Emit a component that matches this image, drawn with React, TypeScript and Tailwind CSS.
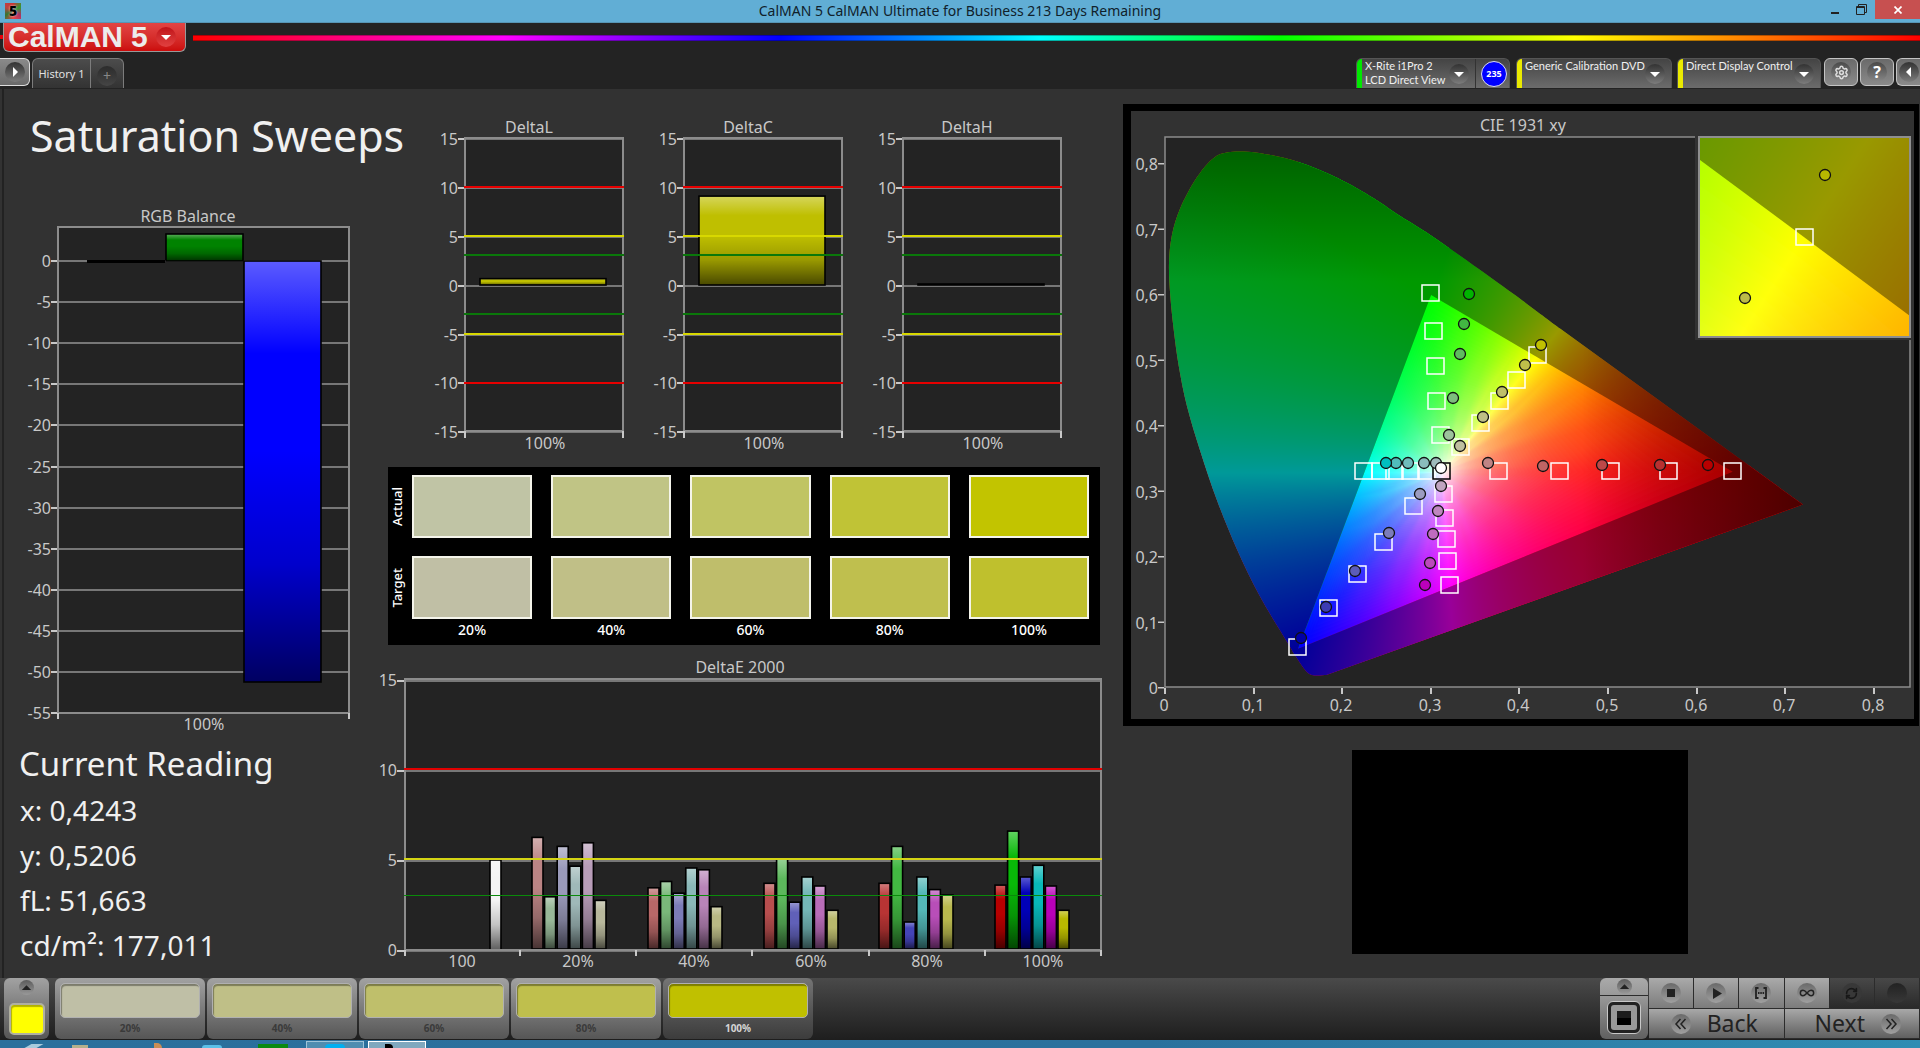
import React from "react";
import { Settings, RefreshCw, Infinity as InfinityIcon } from "lucide-react";

const FONT = "font-['Noto_Sans','Open_Sans',sans-serif]";
const GRID = "#8c8c8c";
const LABEL = "#c8c8c8";

/* ---------- chromaticity maths ---------- */

type Pt = [number, number];
type Scale = { ox: number; oy: number; sx: number; sy: number };
type Box = { x: number; y: number; w: number; h: number };

const RED: Pt = [0.64, 0.33];
const GREEN: Pt = [0.3, 0.6];
const BLUE: Pt = [0.15, 0.06];
const WHITE: Pt = [0.3127, 0.329];

const LOCUS: Pt[] = [
  [0.1818, 0.02], [0.1657, 0.02], [0.1544, 0.034], [0.13, 0.0873], [0.1056, 0.1434], [0.0811, 0.2119], [0.0586, 0.2867],
  [0.0398, 0.3615], [0.0248, 0.43], [0.0154, 0.4924], [0.0097, 0.5484], [0.006, 0.5983], [0.0045, 0.6481],
  [0.0079, 0.6918], [0.0172, 0.7323], [0.0342, 0.7759], [0.0529, 0.807], [0.07, 0.8177], [0.1018, 0.8177],
  [0.1488, 0.8039], [0.1939, 0.779], [0.2352, 0.7477], [0.2615, 0.7237], [0.2991, 0.6917], [0.348, 0.6451],
  [0.393, 0.6016], [0.4457, 0.5484],
];

function chroma(r: number, g: number, b: number): Pt {
  const X = 0.4124 * r + 0.3576 * g + 0.1805 * b;
  const Y = 0.2126 * r + 0.7152 * g + 0.0722 * b;
  const Z = 0.0193 * r + 0.1192 * g + 0.9505 * b;
  const s = X + Y + Z;
  return [X / s, Y / s];
}

const project = (s: Scale, p: Pt): Pt => [s.ox + p[0] * s.sx, s.oy - p[1] * s.sy];

function angleFrom(s: Scale, center: Pt, p: Pt) {
  const a = project(s, center);
  const b = project(s, p);
  const deg = (Math.atan2(b[0] - a[0], a[1] - b[1]) * 180) / Math.PI;
  return (deg + 360) % 360;
}

function edgeColors(a: number[], b: number[]) {
  const out: number[][] = [];
  for (let i = 0; i <= 24; i++) {
    const t = i / 12;
    const ka = t <= 1 ? 1 : 2 - t;
    const kb = t <= 1 ? t : 1;
    out.push(a.map((v, k) => v * ka + b[k] * kb));
  }
  return out;
}

const R3 = [1, 0, 0];
const G3 = [0, 1, 0];
const B3 = [0, 0, 1];

function conic(s: Scale, box: Box, center: Pt, colors: number[][], wrap: boolean) {
  const stops = colors
    .map((c) => ({ a: angleFrom(s, center, chroma(c[0], c[1], c[2])), c }))
    .sort((m, n) => m.a - n.a);
  const list = wrap
    ? [{ a: stops[stops.length - 1].a - 360, c: stops[stops.length - 1].c }, ...stops, { a: stops[0].a + 360, c: stops[0].c }]
    : stops;
  const [cx, cy] = project(s, center);
  const text = list
    .map((q) => `rgb(${q.c.map((v) => Math.round(v * 255)).join(",")}) ${q.a.toFixed(2)}deg`)
    .join(",");
  return `conic-gradient(from 0deg at ${cx - box.x}px ${cy - box.y}px, ${text})`;
}

function smooth(points: Pt[]) {
  let d = `M${points[0][0]} ${points[0][1]}`;
  for (let i = 0; i < points.length - 1; i++) {
    const p0 = points[Math.max(i - 1, 0)];
    const p1 = points[i];
    const p2 = points[i + 1];
    const p3 = points[Math.min(i + 2, points.length - 1)];
    d += `C${p1[0] + (p2[0] - p0[0]) / 6} ${p1[1] + (p2[1] - p0[1]) / 6} ${p2[0] - (p3[0] - p1[0]) / 6} ${p2[1] - (p3[1] - p1[1]) / 6} ${p2[0]} ${p2[1]}`;
  }
  return d;
}

const poly = (s: Scale, pts: Pt[]) => pts.map((p) => project(s, p).join(",")).join(" ");

function Fill({ box, image, clip }: { box: Box; image: string; clip?: string }) {
  return (
    <g clipPath={clip}>
      <foreignObject x={box.x} y={box.y} width={box.w} height={box.h}>
        <div className="h-full w-full" style={{ backgroundImage: image }} />
      </foreignObject>
    </g>
  );
}

function ColorField({ id, s, box }: { id: string; s: Scale; box: Box }) {
  const outline = smooth(LOCUS.map((p) => project(s, p))) + "L" + project(s, [0.719, 0.28]).join(" ") + "Z";
  const extend = (a: Pt, b: Pt, t: number): Pt => [a[0] + (b[0] - a[0]) * t, a[1] + (b[1] - a[1]) * t];
  const leftSide: Pt[] = [extend(BLUE, GREEN, -1), extend(BLUE, GREEN, 2), [-1, 2], [-1, -1]];
  const bottomSide: Pt[] = [extend(BLUE, RED, -1), extend(BLUE, RED, 2), [2, -1], [-1, -1]];
  const steps = 72;
  const layers = [];
  for (let k = 1; k < steps; k++) {
    const w = k / steps;
    const prev = (k - 1) / steps;
    const corners = [[1, w, w], [1, 1, w], [w, 1, w], [w, 1, 1], [w, w, 1], [1, w, 1]];
    layers.push(
      <polygon
        key={k}
        points={poly(s, corners.map((c) => chroma(c[0], c[1], c[2])))}
        fill="#fff"
        fillOpacity={1 - (1 - w) / (1 - prev)}
      />
    );
  }
  const [x0] = project(s, [0.47, 0]);
  const [x1] = project(s, [0.72, 0]);
  const [, y0] = project(s, [0, 0.62]);
  const [, y1] = project(s, [0, 0.83]);
  const all = [...edgeColors(R3, G3), ...edgeColors(G3, B3).slice(1), ...edgeColors(B3, R3).slice(1, -1)];
  return (
    <g>
      <defs>
        <clipPath id={id + "-locus"}><path d={outline} /></clipPath>
        <clipPath id={id + "-left"}><polygon points={poly(s, leftSide)} /></clipPath>
        <clipPath id={id + "-bottom"}><polygon points={poly(s, bottomSide)} /></clipPath>
        <clipPath id={id + "-gamut"}><polygon points={poly(s, [RED, GREEN, BLUE])} /></clipPath>
        <clipPath id={id + "-box"}><rect x={box.x} y={box.y} width={box.w} height={box.h} /></clipPath>
        <linearGradient id={id + "-rd"} gradientUnits="userSpaceOnUse" x1={x0} x2={x1} y1="0" y2="0">
          <stop offset="0" stopOpacity="0" />
          <stop offset="0.35" stopOpacity="0.2" />
          <stop offset="1" stopOpacity="0.5" />
        </linearGradient>
        <linearGradient id={id + "-gd"} gradientUnits="userSpaceOnUse" x1="0" x2="0" y1={y0} y2={y1}>
          <stop offset="0" stopOpacity="0" />
          <stop offset="1" stopOpacity="0.38" />
        </linearGradient>
      </defs>
      <g clipPath={`url(#${id}-box)`}>
        <g clipPath={`url(#${id}-locus)`}>
          <Fill box={box} image={conic(s, box, BLUE, edgeColors(R3, G3), false)} />
          <Fill box={box} image={conic(s, box, GREEN, edgeColors(R3, B3), false)} clip={`url(#${id}-bottom)`} />
          <Fill box={box} image={conic(s, box, RED, edgeColors(G3, B3), false)} clip={`url(#${id}-left)`} />
          <rect x={box.x} y={box.y} width={box.w} height={box.h} fill="#000" fillOpacity="0.4" />
          <g clipPath={`url(#${id}-gamut)`}>
            <Fill box={box} image={conic(s, box, WHITE, all, true)} />
            {layers}
          </g>
          <rect x={box.x} y={box.y} width={box.w} height={box.h} fill={`url(#${id}-rd)`} />
          <rect x={box.x} y={box.y} width={box.w} height={box.h} fill={`url(#${id}-gd)`} />
        </g>
      </g>
    </g>
  );
}

const TARGETS: Pt[] = [
  [1430, 293], [1433, 331], [1435, 366], [1436, 401], [1440, 435], [1460, 447], [1480, 423], [1499, 401], [1516, 380],
  [1537, 355], [1363, 471], [1380, 471], [1394, 471], [1410, 471], [1426, 471], [1498, 471], [1559, 471], [1610, 471],
  [1668, 471], [1732, 471], [1413, 506], [1383, 542], [1357, 574], [1328, 608], [1297, 647], [1443, 494], [1444, 518],
  [1446, 539], [1447, 561], [1449, 585],
];

const READINGS: [number, number, string][] = [
  [1468, 294, "#00b400"], [1463, 324, "#42b742"], [1459, 354, "#5fbb5f"], [1452, 398, "#7dbd7d"], [1448, 435, "#9cc29c"],
  [1459, 446, "#bfbf9f"], [1482, 417, "#bfbf86"], [1501, 392, "#bfbf6a"], [1524, 365, "#bfbf4a"], [1540, 345, "#c0c000"],
  [1435, 463, "#9fbcbc"], [1423, 463, "#8abcbc"], [1407, 463, "#70bcbc"], [1395, 463, "#50bcbc"], [1385, 463, "#00bfbf"],
  [1487, 463, "#c08484"], [1542, 466, "#bf6464"], [1601, 465, "#bc4848"], [1659, 465, "#b83030"], [1707, 465, "#b80000"],
  [1440, 486, "#c0a4c0"], [1437, 511, "#bf86bf"], [1432, 534, "#bf6cbf"], [1429, 563, "#bb4abb"], [1424, 585, "#bb00bb"],
  [1419, 494, "#9c9cc0"], [1388, 533, "#7c7cba"], [1354, 571, "#5c5cb8"], [1325, 607, "#3c3cb4"], [1300, 638, "#0000a8"],
  [1440, 468, "#ffffff"],
];

function Target({ x, y, stroke = "#fff" }: { x: number; y: number; stroke?: string }) {
  return <rect x={x - 8} y={y - 8} width="17" height="16" fill="none" stroke={stroke} strokeWidth="1.5" />;
}

function Reading({ x, y, fill }: { x: number; y: number; fill: string }) {
  return <circle cx={x} cy={y} r="5.5" fill={fill} stroke="#111" strokeWidth="1.3" />;
}

function CieChart() {
  const s = { ox: 1165, oy: 688, sx: 887, sy: 655 };
  const inset = { ox: 1804 - 0.4193 * 4200, oy: 237 + 0.5053 * 3930, sx: 4200, sy: 3930 };
  return (
    <svg viewBox="1131 111 783 608" className="block h-auto w-full" role="img" aria-label="CIE 1931 xy chart">
      <text x="1523" y="131" textAnchor="middle" fontSize="16" fill={LABEL}>CIE 1931 xy</text>
      <rect x="1165" y="137" width="745" height="550" fill="#232323" stroke={GRID} strokeWidth="1.5" />
      <ColorField id="cie" s={s} box={{ x: 1166, y: 138, w: 743, h: 548 }} />
      {TARGETS.map((t, i) => <Target key={i} x={t[0]} y={t[1]} />)}
      <Target x={1441} y={471} stroke="#000" />
      {READINGS.map((r, i) => <Reading key={i} x={r[0] + 1} y={r[1]} fill={r[2]} />)}
      {[0, 1, 2, 3, 4, 5, 6, 7, 8].map((n) => {
        const x = 1164 + Math.round(n * 88.6);
        const y = 687 - n * 65.5;
        const text = n ? `0,${n}` : "0";
        return (
          <g key={n} fill={LABEL} fontSize="16">
            <rect x={x} y="688" width="2" height="6" />
            <text x={x} y="711" textAnchor="middle">{text}</text>
            <rect x="1158" y={y} width="6" height="1.5" />
            <text x="1158" y={y + 7} textAnchor="end">{text}</text>
          </g>
        );
      })}
      <rect x="1695" y="133" width="219" height="207" fill="#323232" />
      <ColorField id="zoom" s={inset} box={{ x: 1699, y: 137, w: 211, h: 200 }} />
      <rect x="1699" y="137" width="211" height="200" fill="none" stroke="#8f8f8f" strokeWidth="2" />
      <Target x={1804} y={237} />
      <Reading x={1825} y={175} fill="#b8b800" />
      <Reading x={1745} y={298} fill="#bcbc48" />
    </svg>
  );
}

/* ---------- bar charts ---------- */

function Gloss({ id }: { id: string }) {
  return (
    <linearGradient id={id} x1="0" x2="0" y1="0" y2="1">
      <stop offset="0" stopColor="#fff" stopOpacity="0.36" />
      <stop offset="0.22" stopColor="#fff" stopOpacity="0" />
      <stop offset="0.45" stopColor="#000" stopOpacity="0" />
      <stop offset="0.72" stopColor="#000" stopOpacity="0.2" />
      <stop offset="1" stopColor="#000" stopOpacity="0.62" />
    </linearGradient>
  );
}

function Bar({ x, y, w, h, fill, gloss }: { x: number; y: number; w: number; h: number; fill: string; gloss: string }) {
  return (
    <g>
      <rect x={x} y={y} width={w} height={h} fill={fill} />
      <rect x={x} y={y} width={w} height={h} fill={`url(#${gloss})`} stroke="#000" strokeWidth="1.6" />
    </g>
  );
}

function RgbBalance() {
  const ticks = [0, 5, 10, 15, 20, 25, 30, 35, 40, 45, 50, 55];
  return (
    <svg viewBox="0 200 376 540" className="block h-auto w-full" role="img" aria-label="RGB Balance chart">
      <defs><Gloss id="rgb-gloss" /></defs>
      <text x="188" y="222" textAnchor="middle" fontSize="16" fill={LABEL}>RGB Balance</text>
      <rect x="58" y="227" width="291" height="486" fill="#232323" />
      {ticks.map((t) => {
        const y = Math.round(261 + t * 8.22);
        return (
          <g key={t}>
            <rect x="58" y={y - 1} width="291" height="2" fill="#777" />
            <rect x="51" y={y - 1} width="7" height="2" fill={LABEL} />
            <text x="51" y={y + 6} textAnchor="end" fontSize="16" fill={LABEL}>{t ? -t : 0}</text>
          </g>
        );
      })}
      <rect x="58" y="227" width="291" height="486" fill="none" stroke={GRID} strokeWidth="2" />
      <rect x="87" y="260" width="78" height="3" fill="#000" />
      <Bar x={166} y={234} w={77} h={27} fill="#008200" gloss="rgb-gloss" />
      <Bar x={244} y={261} w={77} h={421} fill="#0000ff" gloss="rgb-gloss" />
      <rect x="57" y="713" width="2" height="6" fill={LABEL} />
      <rect x="348" y="713" width="2" height="6" fill={LABEL} />
      <text x="204" y="730" textAnchor="middle" fontSize="16" fill={LABEL}>100%</text>
    </svg>
  );
}

function DeltaChart({ title, value }: { title: string; value: number }) {
  const limits: [number, string][] = [[186, "#e60000"], [235, "#d8d800"], [254, "#0a780a"], [313, "#0a780a"], [333, "#d8d800"], [382, "#e60000"]];
  const h = Math.max(value * 9.77, 1);
  return (
    <svg viewBox="425 110 219 350" className="block h-auto w-full" role="img" aria-label={title + " chart"}>
      <defs><Gloss id={title + "-gloss"} /></defs>
      <text x="529" y="133" textAnchor="middle" fontSize="16" fill={LABEL}>{title}</text>
      <rect x="464" y="138" width="160" height="293" fill="#232323" />
      {[15, 10, 5, 0, -5, -10, -15].map((t) => {
        const y = Math.round(286 - t * (t > 0 ? 9.8 : 9.7));
        return (
          <g key={t}>
            <rect x="464" y={y - 1} width="160" height="2" fill="#777" />
            <rect x="458" y={y - 1} width="6" height="2" fill={LABEL} />
            <text x="458" y={y + 6} textAnchor="end" fontSize="16" fill={LABEL}>{t}</text>
          </g>
        );
      })}
      <rect x="465" y="138" width="158" height="293" fill="none" stroke={GRID} strokeWidth="2" />
      <Bar x={480} y={285 - h} w={126} h={h} fill="#bfbf00" gloss={title + "-gloss"} />
      {limits.map(([y, c]) => <rect key={y} x="464" y={y} width="160" height="2" fill={c} />)}
      <rect x="464" y="431" width="2" height="7" fill={LABEL} />
      <rect x="622" y="431" width="2" height="7" fill={LABEL} />
      <text x="545" y="449" textAnchor="middle" fontSize="16" fill={LABEL}>100%</text>
    </svg>
  );
}

const DELTA_E: { label: string; x: number; values: number[]; colors: string[] }[] = [
  { label: "20%", x: 532, values: [6.2, 2.9, 5.7, 4.6, 5.9, 2.7], colors: ["#bb8484", "#98b898", "#9a9aba", "#9fb8b8", "#b89cb8", "#b8b89c"] },
  { label: "40%", x: 648, values: [3.4, 3.75, 3.1, 4.5, 4.4, 2.35], colors: ["#b86868", "#7ab87a", "#7c7cb8", "#8ab8b8", "#b884b8", "#b8b884"] },
  { label: "60%", x: 764, values: [3.65, 5, 2.6, 4, 3.5, 2.15], colors: ["#b84e4e", "#5cb85c", "#6060b8", "#74b8b8", "#b86cb8", "#b8b86c"] },
  { label: "80%", x: 879, values: [3.65, 5.7, 1.5, 4, 3.3, 3], colors: ["#b83434", "#42b842", "#4444b8", "#54b8b8", "#b84eb8", "#b8b84e"] },
  { label: "100%", x: 995, values: [3.55, 6.55, 4, 4.65, 3.5, 2.15], colors: ["#b80000", "#08b808", "#0000b8", "#08b8b8", "#b800b8", "#b8b800"] },
];

function DeltaE() {
  return (
    <svg viewBox="376 650 744 328" className="block h-auto w-full" role="img" aria-label="DeltaE 2000 chart">
      <defs><Gloss id="de-gloss" /></defs>
      <text x="740" y="673" textAnchor="middle" fontSize="16" fill={LABEL}>DeltaE 2000</text>
      <rect x="405" y="679" width="696" height="271" fill="#232323" />
      {[15, 10, 5, 0].map((t) => (
        <g key={t}>
          <rect x="405" y={950 - t * 18} width="696" height="2" fill="#777" />
          <rect x="397" y={950 - t * 18} width="7" height="2" fill={LABEL} />
          <text x="397" y={956 - t * 18} textAnchor="end" fontSize="16" fill={LABEL}>{t}</text>
        </g>
      ))}
      <Bar x={490} y={860} w={11} h={90} fill="#f4f4f4" gloss="de-gloss" />
      {DELTA_E.map((g) =>
        g.values.map((v, i) => (
          <Bar key={g.label + i} x={g.x + i * 12.6} y={949 - v * 18} w={11} h={v * 18} fill={g.colors[i]} gloss="de-gloss" />
        ))
      )}
      <rect x="405" y="679" width="696" height="271" fill="none" stroke={GRID} strokeWidth="2" />
      <rect x="404" y="768" width="698" height="2" fill="#e00000" />
      <rect x="404" y="858" width="698" height="2" fill="#d4d414" />
      <rect x="404" y="895" width="698" height="1" fill="#0a8a0a" />
      {[404, 519, 635, 751, 868, 984, 1100].map((x) => <rect key={x} x={x} y="950" width="2" height="6" fill={LABEL} />)}
      {["100", "20%", "40%", "60%", "80%", "100%"].map((t, i) => (
        <text key={i} x={462 + Math.round(i * 116.2)} y="967" textAnchor="middle" fontSize="16" fill={LABEL}>{t}</text>
      ))}
    </svg>
  );
}

/* ---------- swatches ---------- */

function Swatches() {
  const rows = [
    { name: "Actual", colors: ["bg-[#c0c4a5]", "bg-[#c0c485]", "bg-[#c0c463]", "bg-[#c0c336]", "bg-[#c2c400]"] },
    { name: "Target", colors: ["bg-[#c0bfa5]", "bg-[#c0bf87]", "bg-[#bfbe6b]", "bg-[#bfbf4e]", "bg-[#bfc02d]"] },
  ];
  return (
    <div className="mr-5 ml-3 mt-[7px] grid h-[178px] grid-cols-[5px_repeat(5,1fr)] grid-rows-[63px_63px_auto] gap-x-[19px] gap-y-[18px] bg-black pt-2 pr-[11px] text-sm font-medium text-white">
      {rows.map((row) => (
        <React.Fragment key={row.name}>
          <div className="flex items-center justify-center">
            <span className="ml-[14px] rotate-180 text-[13px] [writing-mode:vertical-rl]">{row.name}</span>
          </div>
          {row.colors.map((c) => <div key={c} className={`border-2 border-[#f4f4ea] ${c}`} />)}
        </React.Fragment>
      ))}
      <span />
      {["20%", "40%", "60%", "80%", "100%"].map((t) => (
        <span key={t} className="-mt-[18px] text-center leading-[22px]">{t}</span>
      ))}
    </div>
  );
}

/* ---------- chrome ---------- */

function Chevron({ dir = "down", className = "" }: { dir?: "down" | "up" | "left" | "right"; className?: string }) {
  const d = { down: "M5 8h10l-5 5z", up: "M5 12h10l-5-5z", left: "M12 5v10l-5-5z", right: "M8 5v10l5-5z" }[dir];
  return (
    <span className={`flex size-5 shrink-0 items-center justify-center rounded-full bg-linear-to-b from-[#333] to-[#7d7d7d] ${className}`}>
      <svg viewBox="0 0 20 20" className="size-5"><path d={d} fill="currentColor" /></svg>
    </span>
  );
}

function Device({ lines, bar, width, children }: { lines: string[]; bar: string; width: string; children?: React.ReactNode }) {
  return (
    <div className={`flex h-[30px] overflow-hidden rounded-t-md border-x border-t border-[#555] bg-linear-to-b from-[#444] to-[#6c6c6c] ${width}`}>
      <span className={`w-[5px] shrink-0 ${bar}`} />
      <button className="flex min-w-0 flex-1 items-start justify-between pl-[3px] pr-[6px] text-left font-['Lato','Noto_Sans',sans-serif] text-[11px] leading-[14px] whitespace-nowrap text-[#f0f0f0]">
        <span>{lines.map((l) => <span key={l} className="block">{l}</span>)}</span>
        <Chevron className="mt-[5px] text-white" />
      </button>
      {children}
    </div>
  );
}

const TOOL = "flex h-7 items-center justify-center rounded-md border border-[#c4c4c4] bg-linear-to-b from-[#6a6a6a] to-[#8a8a8a] text-white";

function Header() {
  return (
    <header className="bg-[#232323]">
      <div className="flex h-[35px] items-start">
        <span className="mt-3 h-1 w-[3px] bg-red-600" />
        <button className="flex h-[29px] w-[183px] items-center overflow-hidden rounded-b-md border border-t-0 border-[#999] bg-linear-to-b from-[#e24444] to-[#cc0a0a] pl-1 font-['Liberation_Sans',sans-serif] text-[30px] leading-[28px] font-bold text-[#ececec]">
          <span>CalMAN</span>
          <span className="ml-2">5</span>
          <span className="ml-2 flex size-5 items-center justify-center rounded-full bg-linear-to-b from-[#c01018] to-[#e24040]">
            <svg viewBox="0 0 20 20" className="size-5"><path d="M5 8h10l-5 5z" fill="#fff" /></svg>
          </span>
        </button>
        <div className="mt-3 ml-[7px] h-[6px] flex-1 border-y border-black/30 bg-[linear-gradient(to_right,#f00,#f0f_18%,#00f_34%,#0ff_49%,#0f0_63%,#ff0_80%,#f00)]" />
      </div>
      <div className="flex h-[31px] items-start">
        <button aria-label="Expand" className="flex h-7 w-[30px] items-center justify-center rounded-r-md border border-l-0 border-[#ddd] bg-linear-to-b from-[#8a8a8a] to-[#6a6a6a] text-white">
          <Chevron dir="right" />
        </button>
        <div className="ml-[2px] flex h-[30px] rounded-t-md border border-b-0 border-[#7c7c7c] bg-linear-to-b from-[#4c4c4c] to-[#333]">
          <button className="w-[57px] pt-[2px] text-[11px] text-[#e0e0e0]">History 1</button>
          <button aria-label="Add" className="flex w-[33px] items-center justify-center border-l border-[#7c7c7c] text-sm text-[#888]">
            <span className="mt-1 flex size-5 items-center justify-center rounded-full bg-linear-to-b from-[#2c2c2c] to-[#454545] leading-none">+</span>
          </button>
        </div>
        <div className="ml-auto flex">
          <Device lines={["X-Rite i1Pro 2", "LCD Direct View"]} bar="bg-[#00e800]" width="w-[154px]">
            <button className="flex w-[34px] shrink-0 items-center justify-end border-l border-[#333] pr-[2px]">
              <span className="flex size-[26px] items-center justify-center rounded-full border border-[#dde] bg-[#0000ff] text-[9px] font-bold text-white">235</span>
            </button>
          </Device>
          <span className="w-[6px]" />
          <Device lines={["Generic Calibration DVD"]} bar="bg-[#eaea00]" width="w-[156px]" />
          <span className="w-[5px]" />
          <Device lines={["Direct Display Control"]} bar="bg-[#eaea00]" width="w-[144px]" />
          <button aria-label="Settings" className={`ml-[3px] w-[34px] ${TOOL}`}>
            <span className="flex size-5 items-center justify-center rounded-full bg-linear-to-b from-[#4a4a4a] to-[#888] text-[#ddd]"><Settings size={15} strokeWidth={2.4} /></span>
          </button>
          <button aria-label="Help" className={`ml-[2px] w-[34px] ${TOOL}`}>
            <span className="flex size-5 items-center justify-center rounded-full bg-linear-to-b from-[#4a4a4a] to-[#888] text-base leading-none font-bold">?</span>
          </button>
          <button aria-label="Collapse" className="ml-[2px] flex h-7 w-6 items-center justify-center rounded-l-md border border-r-0 border-[#c4c4c4] bg-linear-to-b from-[#6a6a6a] to-[#8a8a8a] text-white">
            <Chevron dir="left" />
          </button>
        </div>
      </div>
    </header>
  );
}

function TitleBar() {
  return (
    <div className="relative flex h-[23px] items-start justify-center border-b border-[#5795b5] bg-[#61aed5] text-sm leading-[22px] text-[#10212b]">
      <span className="absolute top-[3px] left-[5px] flex size-4 items-center justify-center bg-[conic-gradient(#c33,#393,#a36,#e44,#373,#b44,#c33)] text-sm leading-none font-black text-black [text-shadow:0_0_2px_#fff]">5</span>
      <h1>CalMAN 5 CalMAN Ultimate for Business 213 Days Remaining</h1>
      <div className="absolute top-0 right-0 flex h-[19px] items-center">
        <button aria-label="Minimize" className="flex h-full w-6 items-center justify-center">
          <svg viewBox="0 0 10 10" className="size-[10px]"><path d="M1 8h8" stroke="#222" strokeWidth="2" /></svg>
        </button>
        <button aria-label="Restore" className="flex h-full w-7 items-center justify-center">
          <svg viewBox="0 0 11 11" className="size-[11px]" fill="none" stroke="#222"><path d="M2.5 2.5v-2h8v8h-2" /><path d="M.5 2.5h8v8h-8zM.5 3.5h8" /></svg>
        </button>
        <button aria-label="Close" className="flex h-full w-[45px] items-center justify-center bg-[#c75050]">
          <svg viewBox="0 0 8 8" className="size-2"><path d="M.5.5l7 7M7.5.5l-7 7" stroke="#fff" strokeWidth="1.7" /></svg>
        </button>
      </div>
    </div>
  );
}

function PatternButton({ label, color, active }: { label: string; color: string; active?: boolean }) {
  return (
    <button
      className={`flex h-[61px] w-[150px] flex-col rounded-md bg-linear-to-b px-[5px] pt-[5px] ${
        active ? "from-[#757575] to-[#3c3c3c] text-[#d4d4d4]" : "from-[#a2a2a2] to-[#565656] text-[#3a3a3a]"
      }`}
    >
      <span className={`h-[37px] w-full rounded-[5px] border border-[#b0b0b0] shadow-[inset_1px_2px_1px_rgba(0,0,0,0.35)] ${color}`} />
      <span className="w-full text-center text-[10px] leading-[21px] font-bold">{label}</span>
    </button>
  );
}

const KEY = "flex items-center justify-center border-r border-b border-[#2c2c2c] bg-linear-to-b text-[#222]";
const DISC = "flex size-5 items-center justify-center rounded-full bg-linear-to-b from-[#6a6a6a] to-[#a0a0a0]";

function Chevrons({ flip }: { flip?: boolean }) {
  return (
    <span className={DISC}>
      <svg viewBox="0 0 20 20" className={`size-5 ${flip ? "rotate-180" : ""}`} fill="none" stroke="#222" strokeWidth="1.5">
        <path d="M9.5 5l-4.5 5 4.5 5M14.5 5l-4.5 5 4.5 5" />
      </svg>
    </span>
  );
}

function BottomBar() {
  return (
    <footer className="flex h-[62px] bg-linear-to-b from-[#4a4a4a] to-[#1e1e1e]">
      <button aria-label="Pattern window" className="ml-1 flex h-[61px] w-[45px] flex-col items-center rounded-md bg-linear-to-b from-[#a2a2a2] to-[#565656] pt-[2px]">
        <span className="flex size-[15px] items-center justify-center rounded-full bg-linear-to-b from-[#5c5c5c] to-[#999]">
          <svg viewBox="0 0 16 16" className="size-4"><path d="M3 10h10L8 5z" fill="#222" /></svg>
        </span>
        <span className="mt-2 h-8 w-9 rounded-[5px] border-2 border-[#b0b0a0] bg-[#ffff00] shadow-[inset_1px_2px_1px_rgba(0,0,0,0.3)]" />
      </button>
      <div className="ml-[6px] flex gap-[2px]">
        <PatternButton label="20%" color="bg-[#bfbfa6]" />
        <PatternButton label="40%" color="bg-[#bfbf87]" />
        <PatternButton label="60%" color="bg-[#bfbf6b]" />
        <PatternButton label="80%" color="bg-[#bfbf4d]" />
        <PatternButton label="100%" color="bg-[#c0c000]" active />
      </div>
      <div className="ml-auto flex h-[61px]">
        <div className="flex w-[48px] flex-col overflow-hidden rounded-md">
          <button aria-label="Show menu" className="flex h-[18px] items-center justify-center border-b border-[#2c2c2c] bg-linear-to-b from-[#aaa] to-[#999]">
            <span className="flex size-[15px] items-center justify-center rounded-full bg-linear-to-b from-[#5c5c5c] to-[#999]">
              <svg viewBox="0 0 16 16" className="size-4"><path d="M3 10h10L8 5z" fill="#222" /></svg>
            </span>
          </button>
          <button aria-label="Stop reading" className="flex flex-1 items-center justify-center bg-linear-to-b from-[#999] to-[#606060]">
            <span className="flex h-[33px] w-[34px] items-center justify-center rounded-md border border-[#c8c8c8] bg-[#222] p-[3px]">
              <span className="flex h-full w-full items-center justify-center rounded-[3px] bg-[#999]">
                <span className="size-[14px] bg-linear-to-b from-[#1c1c1c] from-50% to-black to-50%" />
              </span>
            </span>
          </button>
        </div>
        <div className="ml-[1px] grid w-[271px] grid-cols-6 grid-rows-[31px_30px]">
          <button aria-label="Stop" className={`${KEY} from-[#aaa] to-[#7c7c7c]`}><span className={DISC}><span className="size-2 bg-[#222]" /></span></button>
          <button aria-label="Play" className={`${KEY} from-[#aaa] to-[#7c7c7c]`}>
            <span className={DISC}><svg viewBox="0 0 20 20" className="size-5"><path d="M7 5v11l9-5.5z" fill="#222" /></svg></span>
          </button>
          <button aria-label="Read series" className={`${KEY} from-[#aaa] to-[#7c7c7c]`}>
            <span className={DISC}>
              <svg viewBox="0 0 20 20" className="size-5" fill="none" stroke="#222" strokeWidth="1.8">
                <path d="M7.5 5H5v10h2.5M12.500 5H15v10h-2.500" />
                <path d="M7 10h1.500M9.300 10h1.500M11.600 10h1.500" />
              </svg>
            </span>
          </button>
          <button aria-label="Read continuously" className={`${KEY} from-[#aaa] to-[#7c7c7c]`}><span className={DISC}><InfinityIcon size={16} strokeWidth={2.2} /></span></button>
          <button aria-label="Refresh" className={`${KEY} from-[#484848] to-[#2a2a2a]`}>
            <span className="flex size-5 items-center justify-center rounded-full bg-[#383838]"><RefreshCw size={13} strokeWidth={3} color="#181818" /></span>
          </button>
          <button aria-label="Unused" className={`${KEY} from-[#484848] to-[#2a2a2a]`}><span className="size-5 rounded-full bg-linear-to-b from-[#222] to-[#383838]" /></button>
          <button className={`${KEY} col-span-3 gap-4 from-[#a8a8a8] to-[#606060] pr-1 text-[23px] leading-[28px]`}><Chevrons /><span className="pb-[2px]">Back</span></button>
          <button className={`${KEY} col-span-3 gap-4 from-[#a8a8a8] to-[#606060] pl-3 text-[23px] leading-[28px]`}><span className="pb-[2px]">Next</span><Chevrons flip /></button>
        </div>
      </div>
    </footer>
  );
}

function Taskbar() {
  return (
    <div className="flex h-2 items-end overflow-hidden bg-linear-to-r from-[#2a6f9c] via-[#2a719d] via-60% to-[#2f8db3]">
      <span className="ml-7 h-1 w-3 -skew-x-[60deg] bg-[#a9cbdd]" />
      <span className="ml-8 h-[3px] w-4 bg-[#b5b08c]" />
      <span className="ml-[66px] h-[5px] w-2 rounded-tr-full bg-[#c98d55]" />
      <span className="ml-10 h-[3px] w-5 rounded-t-full bg-[#5cc0e8]" />
      <span className="ml-9 h-[4px] w-[30px] bg-[#0a8a10]" />
      <span className="ml-[18px] flex h-[7px] w-[58px] items-end justify-center border border-b-0 border-[#9fc4d8] bg-[#4f8db0]"><span className="h-1 w-5 rounded-t-full bg-[#00aff0]" /></span>
      <span className="ml-1 flex h-[7px] w-[58px] items-end border border-b-0 border-white bg-[#80a8be] pl-4"><span className="h-1 w-2 rounded-tr-full bg-black" /></span>
    </div>
  );
}

export default function App() {
  return (
    <div className={`flex min-h-screen flex-col overflow-hidden bg-[#323232] ${FONT}`}>
      <TitleBar />
      <Header />
      <main className="grid flex-1 grid-cols-[376fr_744fr_800fr] items-start bg-[#323232]">
        <section className="min-w-0 self-stretch bg-[linear-gradient(to_right,#323232_2px,#222_2px,#222_4px,transparent_4px)] pt-[19px] text-[#f0f0f0]">
          <h2 className="mb-9 pl-[30px] text-[43px] leading-[56px] whitespace-nowrap">Saturation Sweeps</h2>
          <RgbBalance />
          <h3 className="pl-[19px] text-[33px] leading-[48px]">Current Reading</h3>
          <div className="pl-5 text-[28px] leading-[45px]">
            <p>x: 0,4243</p>
            <p>y: 0,5206</p>
            <p>fL: 51,663</p>
            <p>cd/m²: 177,011</p>
          </div>
        </section>
        <section className="min-w-0 pt-[21px]">
          <div className="grid grid-cols-3 pr-[38px] pl-[49px]">
            <DeltaChart title="DeltaL" value={0.65} />
            <DeltaChart title="DeltaC" value={9.1} />
            <DeltaChart title="DeltaH" value={0.1} />
          </div>
          <Swatches />
          <div className="mt-[5px]"><DeltaE /></div>
        </section>
        <section className="min-w-0 pt-[15px]">
          <div className="mr-[1px] ml-[3px] border-x-8 border-y-[7px] border-r-[5px] border-black"><CieChart /></div>
          <div className="mx-auto mt-6 h-[204px] w-[336px] bg-black" />
        </section>
      </main>
      <BottomBar />
      <Taskbar />
    </div>
  );
}
